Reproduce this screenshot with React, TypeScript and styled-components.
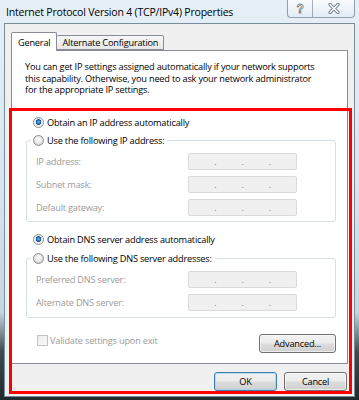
import styled, { createGlobalStyle } from "styled-components";

const Global = createGlobalStyle`
  html, body { margin: 0; padding: 0; }
  body {
    font-family: "Open Sans", "Noto Sans", sans-serif;
    font-size: 9.2px;
    letter-spacing: -0.2px;
    color: #000;
  }
`;

const Frame = styled.div`
  position: relative;
  width: 359px;
  height: 400px;
  overflow: hidden;
  display: flex;
  flex-direction: column;
  background: linear-gradient(180deg, #e6eff7 0%, #d8e6f1 45%, #c4d6e2 78%, #3b4b4f 88%, #1e2b2d 100%);
`;

const TitleBar = styled.div`
  height: 23px;
  display: flex;
  justify-content: space-between;
  align-items: flex-start;
  padding-left: 6px;
`;

const Title = styled.div`
  padding-top: 6px;
  font-size: 10.5px;
  letter-spacing: -0.2px;
  line-height: 13px;
  color: #000;
`;

const Caption = styled.div`
  display: flex;
  margin-right: 4px;
  height: 17px;
  border: 1px solid rgba(70, 90, 110, 0.55);
  border-top: none;
  border-radius: 0 0 4px 4px;
  background: linear-gradient(180deg, rgba(255,255,255,0.75), rgba(225,235,244,0.6));
  overflow: hidden;
`;

const CapButton = styled.div<{ $w: number }>`
  width: ${(p) => p.$w}px;
  display: flex;
  align-items: center;
  justify-content: center;
  & + & { border-left: 1px solid rgba(70, 90, 110, 0.45); }
`;

const HelpGlyph = styled.span`
  font-family: "Liberation Sans", sans-serif;
  font-weight: bold;
  font-size: 12px;
  color: #fff;
  -webkit-text-stroke: 0.8px #6f7f8c;
  line-height: 12px;
`;

const Client = styled.div`
  margin: 0 4px 3px 4px;
  flex: 1;
  border: 1px solid #7b8c99;
  background: #f0f0f0;
  padding: 8px 6px 0 6px;
  display: flex;
  flex-direction: column;
`;

const Tabs = styled.div`
  display: flex;
  align-items: flex-end;
  height: 18px;
  position: relative;
  z-index: 1;
`;

const Tab = styled.div<{ $active?: boolean }>`
  box-sizing: border-box;
  height: ${(p) => (p.$active ? 19 : 15)}px;
  margin-bottom: ${(p) => (p.$active ? -1 : 0)}px;
  padding: ${(p) => (p.$active ? "1px 6px 0" : "0 5px")};
  border: 1px solid #898c95;
  border-bottom: ${(p) => (p.$active ? "none" : "1px solid #898c95")};
  border-left: ${(p) => (p.$active ? "1px solid #898c95" : "none")};
  border-radius: 2px 2px 0 0;
  background: ${(p) => (p.$active ? "#fff" : "linear-gradient(180deg, #f6f6f6, #e8e8e8)")};
  line-height: 13px;
  display: flex;
  align-items: center;
`;

const Panel = styled.div`
  box-sizing: border-box;
  height: 314px;
  background: #fff;
  border: 1px solid #898c95;
  padding: 0 11px 0 13px;
  display: flex;
  flex-direction: column;
`;

const Description = styled.p`
  margin: 10px 0 0 0;
  line-height: 11.5px;
  white-space: nowrap;
`;

const OptionRow = styled.label<{ $mt: number }>`
  display: flex;
  align-items: center;
  height: 13px;
  margin: ${(p) => p.$mt}px 0 0 8px;
  gap: 3px;
`;

const Radio = styled.span<{ $checked?: boolean }>`
  box-sizing: border-box;
  width: 11px;
  height: 11px;
  border-radius: 50%;
  border: 1px solid #8e8f8f;
  background: ${(p) =>
    p.$checked
      ? "radial-gradient(circle at 50% 45%, #7fc2ee 0, #2a7bc0 1.6px, #1a4f86 2.6px, #e8e8e8 3px, #f6f6f6 5px)"
      : "radial-gradient(circle at 50% 40%, #fdfdfd 0, #e4e4e4 4px, #d2d2d2 5px)"};
  flex: none;
`;

const Group = styled.fieldset<{ $mt: number }>`
  margin: ${(p) => p.$mt}px 0 0 1px;
  padding: 0;
  border: 1px solid #d5dfe5;
  border-radius: 3px;
  min-width: 0;
`;

const Legend = styled.legend`
  margin-left: 4px;
  padding: 0 3px 0 2px;
  height: 13px;
  display: flex;
  align-items: center;
  gap: 3px;
  line-height: 13px;
`;

const Fields = styled.div<{ $pb: number }>`
  display: flex;
  flex-direction: column;
  gap: 6px;
  padding: 6px 38px ${(p) => p.$pb}px 9px;
`;

const FieldRow = styled.div`
  display: flex;
  justify-content: space-between;
  align-items: center;
  height: 17px;
`;

const FieldLabel = styled.span`
  color: #9b9b9b;
`;

const IpBox = styled.div`
  box-sizing: border-box;
  width: 109px;
  height: 17px;
  border: 1px solid #d9d9d9;
  border-radius: 2px;
  background: #f0f0f0;
  display: flex;
  line-height: 15px;
`;

const Octet = styled.span`
  flex: 1;
`;

const Dot = styled.span`
  color: #7a7a7a;
  font-size: 9px;
`;

const BottomRow = styled.div`
  display: flex;
  justify-content: space-between;
  align-items: flex-start;
  margin-top: 16px;
`;

const CheckRow = styled.label`
  display: flex;
  align-items: center;
  gap: 2px;
  height: 13px;
  margin: 0 0 0 12px;
  color: #9b9b9b;
`;

const CheckBox = styled.span`
  box-sizing: border-box;
  width: 11px;
  height: 11px;
  border: 1px solid #c2c2c2;
  background: linear-gradient(135deg, #ececec, #fafafa);
`;

const Button = styled.button<{ $w: number; $default?: boolean }>`
  box-sizing: border-box;
  width: ${(p) => p.$w}px;
  height: 19px;
  padding: 0;
  font: inherit;
  letter-spacing: inherit;
  color: #000;
  border: 1px solid ${(p) => (p.$default ? "#3c7fb1" : "#707070")};
  border-radius: 3px;
  background: linear-gradient(180deg, #f2f2f2 0%, #ebebeb 48%, #dddddd 52%, #cfcfcf 100%);
  box-shadow: inset 0 0 0 1px ${(p) => (p.$default ? "rgba(160,210,240,0.7)" : "rgba(255,255,255,0.6)")};
`;

const ButtonBar = styled.div`
  display: flex;
  justify-content: flex-end;
  gap: 7px;
  margin: 8px 1px 0 0;
`;

const Highlight = styled.div`
  position: absolute;
  left: 9px;
  top: 108px;
  width: 343px;
  height: 286px;
  box-sizing: border-box;
  border: 3px solid #ff0000;
  pointer-events: none;
`;

const IpField = () => (
  <IpBox>
    <Octet />
    <Dot>.</Dot>
    <Octet />
    <Dot>.</Dot>
    <Octet />
    <Dot>.</Dot>
    <Octet />
  </IpBox>
);

const CloseIcon = () => (
  <svg width="12" height="11" viewBox="0 0 12 11">
    <path d="M2 1.5 L10 9.5 M10 1.5 L2 9.5" stroke="#6f7f8c" strokeWidth="3.2" strokeLinecap="round" />
    <path d="M2 1.5 L10 9.5 M10 1.5 L2 9.5" stroke="#ffffff" strokeWidth="1.6" strokeLinecap="round" />
  </svg>
);

export default function App() {
  return (
    <>
      <Global />
      <Frame>
        <TitleBar>
          <Title>Internet Protocol Version 4 (TCP/IPv4) Properties</Title>
          <Caption>
            <CapButton $w={24}>
              <HelpGlyph>?</HelpGlyph>
            </CapButton>
            <CapButton $w={41}>
              <CloseIcon />
            </CapButton>
          </Caption>
        </TitleBar>
        <Client>
          <Tabs>
            <Tab $active>General</Tab>
            <Tab>Alternate Configuration</Tab>
          </Tabs>
          <Panel>
            <Description>
              You can get IP settings assigned automatically if your network supports
              <br />
              this capability. Otherwise, you need to ask your network administrator
              <br />
              for the appropriate IP settings.
            </Description>

            <OptionRow $mt={20}>
              <Radio $checked />
              Obtain an IP address automatically
            </OptionRow>
            <Group $mt={5}>
              <Legend>
                <Radio />
                Use the following IP address:
              </Legend>
              <Fields $pb={5}>
                <FieldRow>
                  <FieldLabel>IP address:</FieldLabel>
                  <IpField />
                </FieldRow>
                <FieldRow>
                  <FieldLabel>Subnet mask:</FieldLabel>
                  <IpField />
                </FieldRow>
                <FieldRow>
                  <FieldLabel>Default gateway:</FieldLabel>
                  <IpField />
                </FieldRow>
              </Fields>
            </Group>

            <OptionRow $mt={11}>
              <Radio $checked />
              Obtain DNS server address automatically
            </OptionRow>
            <Group $mt={6}>
              <Legend>
                <Radio />
                Use the following DNS server addresses:
              </Legend>
              <Fields $pb={6}>
                <FieldRow>
                  <FieldLabel>Preferred DNS server:</FieldLabel>
                  <IpField />
                </FieldRow>
                <FieldRow>
                  <FieldLabel>Alternate DNS server:</FieldLabel>
                  <IpField />
                </FieldRow>
              </Fields>
            </Group>

            <BottomRow>
              <CheckRow>
                <CheckBox />
                Validate settings upon exit
              </CheckRow>
              <Button $w={77}>Advanced...</Button>
            </BottomRow>
          </Panel>
          <ButtonBar>
            <Button $w={63} $default>OK</Button>
            <Button $w={63}>Cancel</Button>
          </ButtonBar>
        </Client>
        <Highlight />
      </Frame>
    </>
  );
}
